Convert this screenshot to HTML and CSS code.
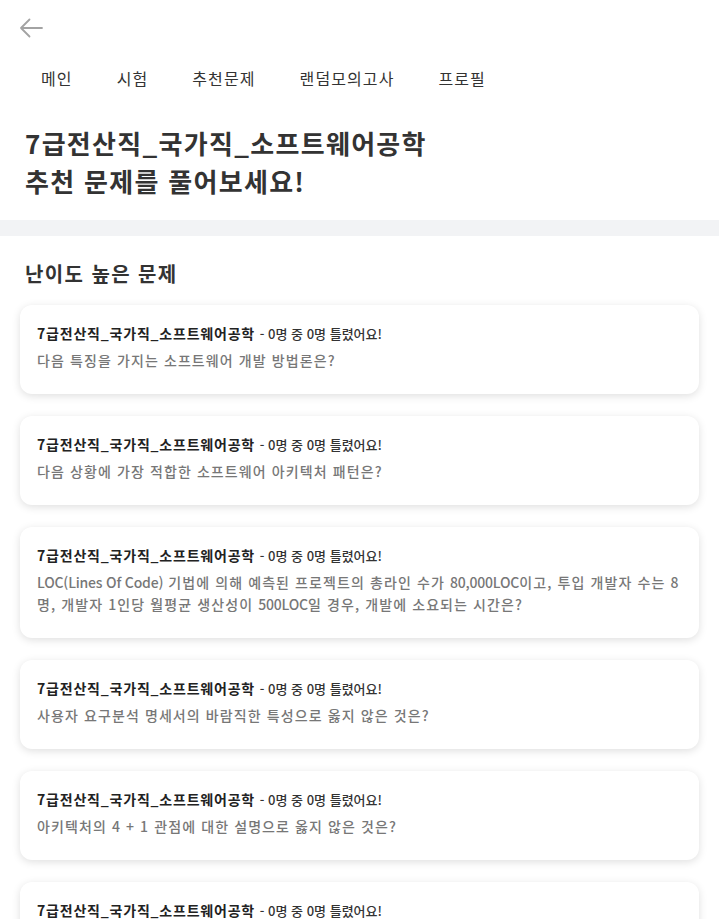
FILE: index.html
```html
<!DOCTYPE html>
<html lang="ko">
<head>
    <meta charset="UTF-8">
    <meta name="viewport" content="width=device-width, initial-scale=1.0">
    <title>추천문제</title>
    <link rel="stylesheet" href="styles.css">
</head>
<body>
    <header class="topbar">
        <button class="back" aria-label="뒤로">
            <svg width="24" height="20" viewBox="0 0 24 20" fill="none" stroke="#a3a3a3" stroke-width="1.8" stroke-linecap="round" stroke-linejoin="round">
                <path d="M23 10H2M10.5 1.5L2 10l8.5 8.5"/>
            </svg>
        </button>
    </header>

    <nav class="tabs">
        <a href="#">메인</a>
        <a href="#">시험</a>
        <a href="#">추천문제</a>
        <a href="#">랜덤모의고사</a>
        <a href="#">프로필</a>
    </nav>

    <section class="intro">
        <h1>7급전산직_국가직_소프트웨어공학<br>추천 문제를 풀어보세요!</h1>
    </section>

    <div class="divider"></div>

    <section class="list">
        <h2>난이도 높은 문제</h2>

        <div class="card">
            <p class="card-title">7급전산직_국가직_소프트웨어공학 <span>- 0명 중 0명 틀렸어요!</span></p>
            <p class="card-question">다음 특징을 가지는 소프트웨어 개발 방법론은?</p>
        </div>
        <div class="card">
            <p class="card-title">7급전산직_국가직_소프트웨어공학 <span>- 0명 중 0명 틀렸어요!</span></p>
            <p class="card-question">다음 상황에 가장 적합한 소프트웨어 아키텍처 패턴은?</p>
        </div>
        <div class="card">
            <p class="card-title">7급전산직_국가직_소프트웨어공학 <span>- 0명 중 0명 틀렸어요!</span></p>
            <p class="card-question"><span class="latin">LOC(Lines Of Code)</span> 기법에 의해 예측된 프로젝트의 총라인 수가 <span class="latin">80,000LOC</span>이고, 투입 개발자 수는 8명, 개발자 1인당 월평균 생산성이 <span class="latin">500LOC</span>일 경우, 개발에 소요되는 시간은?</p>
        </div>
        <div class="card">
            <p class="card-title">7급전산직_국가직_소프트웨어공학 <span>- 0명 중 0명 틀렸어요!</span></p>
            <p class="card-question">사용자 요구분석 명세서의 바람직한 특성으로 옳지 않은 것은?</p>
        </div>
        <div class="card">
            <p class="card-title">7급전산직_국가직_소프트웨어공학 <span>- 0명 중 0명 틀렸어요!</span></p>
            <p class="card-question">아키텍처의 4 + 1 관점에 대한 설명으로 옳지 않은 것은?</p>
        </div>
        <div class="card">
            <p class="card-title">7급전산직_국가직_소프트웨어공학 <span>- 0명 중 0명 틀렸어요!</span></p>
            <p class="card-question">소프트웨어 테스트에 대한 설명으로 옳은 것은?</p>
        </div>
    </section>
</body>
</html>
```

FILE: styles.css
```css
* {
    box-sizing: border-box;
}
body {
    margin: 0;
    font-family: "Noto Sans CJK KR", "Noto Sans", sans-serif;
    color: #333;
    background: #fff;
}
.topbar {
    height: 56px;
    display: flex;
    align-items: center;
    padding-left: 19px;
}
.back {
    border: none;
    background: none;
    padding: 0;
    display: flex;
    cursor: pointer;
}
.tabs {
    display: flex;
    height: 44px;
    align-items: center;
    padding-left: 19px;
}
.tabs a {
    padding: 0 22px;
    font-size: 16px;
    color: #333;
    text-decoration: none;
    letter-spacing: 1.1px;
}
.intro {
    padding: 24px 25px 20px;
}
.intro h1 {
    margin: 0;
    font-size: 26px;
    line-height: 38px;
    font-weight: 700;
    color: #333;
    letter-spacing: 1.3px;
}
.divider {
    height: 16px;
    background: #f2f3f5;
}
.list {
    padding: 24px 20px 20px;
}
.list h2 {
    margin: 0 0 17px 5px;
    font-size: 20px;
    line-height: 28px;
    font-weight: 700;
    letter-spacing: 1.4px;
}
.card {
    background: #fff;
    border-radius: 12px;
    box-shadow: 0 2px 8px rgba(0, 0, 0, 0.13);
    padding: 17px 14px 23px 17px;
    margin-bottom: 22px;
}
.card p {
    margin: 0;
}
.card-title {
    font-size: 14px;
    line-height: 22px;
    font-weight: 700;
    color: #222;
    margin-bottom: 4px !important;
    letter-spacing: 0.8px;
}
.card-title span {
    font-size: 13px;
    font-weight: 500;
    color: #333;
    letter-spacing: 0;
}
.card-question {
    font-size: 14px;
    line-height: 22px;
    font-weight: 500;
    color: #777;
    letter-spacing: 1.1px;
    word-break: break-all;
}
.card-question .latin {
    letter-spacing: -0.2px;
}
```
